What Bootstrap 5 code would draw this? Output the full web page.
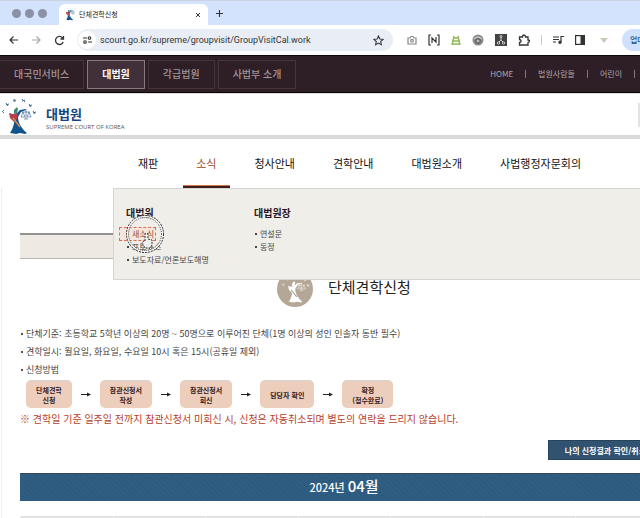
<!DOCTYPE html>
<html lang="ko">
<head>
<meta charset="utf-8">
<meta name="viewport" content="width=device-width, initial-scale=1">
<title>단체견학신청</title>
<link rel="stylesheet" href="https://cdn.jsdelivr.net/npm/bootstrap@5.3.0/dist/css/bootstrap.min.css">
<style>
body{font-family:"Noto Sans CJK KR",sans-serif;font-size:9px;line-height:18px;color:#444;background:#fff;overflow:hidden}
a{text-decoration:none;color:inherit}
button{border:0;background:none;padding:0;color:inherit}
svg{display:block;flex:none}
.tab-strip{background:#d3e3fd;height:25px;padding-left:12px;border-top:1px solid #c9d3e2}
.light{width:9px;height:9px;border-radius:50%;background:#8b90a4}
.light+.light{margin-left:4px}
.page-tab{width:149px;height:21px;margin-left:12px;padding:0 7px 0 5px;border-radius:6px 6px 0 0;background:#fff;font-size:7px;line-height:21px;color:#222}
.toolbar{height:30px;padding:0 0 0 8px;background:#fff;color:#444}
.address{flex:none;height:22px;width:50%;margin-left:12px;padding:0 9px 0 1px;border-radius:11px;background:#e9eef6}
.address input{border:0;outline:0;background:none;padding:0;font:9px/20px Roboto,"Noto Sans CJK KR",sans-serif;color:#333;min-width:0}
.site-info{width:18px;height:18px;border-radius:50%;background:#fff}
.tools{gap:11px;margin-left:14px}
.update{height:22px;padding:0 14px 0 8px;margin-left:14px;border-radius:11px;background:#cfe1fd;font-size:8px;font-weight:500;color:#24558e;white-space:nowrap}
.service-bar{height:38px;background:#2e1e26;border-top:1px solid #0c0609;border-bottom:1px solid #0c0609;color:#a3969b}
.sites{gap:3px}
.service-bar .site{height:29px;padding:0 14px;border:1px solid #45343c;font-size:10px;line-height:26px;font-weight:500;white-space:nowrap}
.service-bar .site.current{background:#41303a;border-color:#87797f;color:#fff;font-weight:700}
.service-bar .quick{gap:12px;font-size:8px;color:#b1a6aa;white-space:nowrap;margin-right:5px}
.quick i{width:1px;height:8px;background:#83777c}
.brand-row{height:46px;border-bottom:4px solid #d9d9d9;border-top:1px solid #ddd}
.brand-link{padding-top:4px}
.brand-text{margin:4px 0 0 8px}
.brand-name{font-size:13px;line-height:18px;font-weight:700;color:#15467e}
.brand-sub{font:6px/9px "Open Sans",sans-serif;color:#555}
.search-edge{width:2px;height:24px;background:#e2e2e2}
.main-nav{height:49px;padding-left:125px;gap:12px;position:relative}
.main-nav .section-link{padding:0 13px;font-size:11px;line-height:49px;height:49px;color:#111;white-space:nowrap}
.main-nav .section-link.current{color:#9a4a2b;border-bottom:2px solid #3b1f1a;box-shadow:inset 0 -1px #d2713e}
.mega{position:absolute;left:113px;right:0;top:49px;z-index:5;background:#f0eee9;border:1px solid #d5d5d5;border-right:0;padding:15px 12px 13px}
.mega section{width:128px}
.mega h2{font-size:10px;line-height:18px;font-weight:700;color:#2c141c;margin:0 0 5px}
.mega ul,.facts{list-style:none;margin:0;padding:0}
.mega li{font-size:8px;line-height:13px;padding-left:6px;position:relative;white-space:nowrap}
.mega li::before{content:"";position:absolute;left:1px;top:6px;width:2px;height:2px;background:#444}
.mega .focused{z-index:1}
.mega .focused::before{display:none}
.focused a{color:#9a4a2b}
.focus-box{position:absolute;left:-7px;top:0;width:37px;height:14px;border:1px dashed #df6e50;background:#fbd9c866}
.pointer{position:absolute;left:-1px;top:-12px;pointer-events:none}
.content{border-left:1px solid #eee;margin:0 -28px 0 1px;padding:45px 0 0 18px}
.crumbs{height:26px;background:#eeeae3;border-top:2px solid #929292;border-bottom:1px solid #bbb5ad}
.title-row{gap:15px;padding:12px 0 0 257px}
.title-row h1{font-size:15px;line-height:22px;font-weight:400;color:#222;margin:0 0 4px}
.facts{margin-top:18px}
.facts li{line-height:18px;padding-left:6px;background:linear-gradient(#555,#555) 1px 8px/2px 2px no-repeat;white-space:nowrap}
.steps{gap:9px;margin:1px 0 0 6px;color:#222}
.step-box{height:28px;padding:0 10px;border-radius:5px;background:#edcebd;border-top:1px solid #d8d3cb;font-size:7px;line-height:10px;font-weight:700;color:#35201a;text-align:center;white-space:nowrap}
.notice{font-size:10px;line-height:20px;color:#b8402a;margin:1px 0 0;white-space:nowrap}
.result-btn{height:20px;margin-top:11px;padding:0 21px 0 16px;background:#315270;border:1px solid #27435a;font-size:8px;line-height:17px;font-weight:700;color:#fff;white-space:nowrap}
.month{height:28px;margin:13px 0 0;background:repeating-linear-gradient(45deg,#2d5b80 0 2px,#305e83 2px 4px);border-top:1px solid #35484f;font-size:11px;line-height:24px;font-weight:500;color:#fff;text-align:center}
.month b{font-size:15px;font-weight:500}
.days{width:100%;margin-top:15px;table-layout:fixed;background:#e2e2e2}
.days th{height:18px;border-left:1px solid #eee}
.logo{color:#456f99;--robe:#10538d;--shirt:#b63f4b;--face:#3b8a73;--band:#d98a55}
.seal{color:#f5f0e8;--robe:#fff;--shirt:#fff;--face:#fff;--band:#b4a797}
.robe-fill{fill:var(--robe)}.shirt-fill{fill:var(--shirt)}.face-fill{fill:var(--face)}.band-line{stroke:var(--band)}
</style>
<script src="https://cdn.jsdelivr.net/npm/bootstrap@5.3.0/dist/js/bootstrap.bundle.min.js"></script>
</head>
<body>
<svg width="0" height="0" class="position-absolute" aria-hidden="true">
<symbol id="justice" viewBox="0 0 38 38">
<g fill="none" stroke="currentColor" stroke-width="1"><path d="M2 14l2-2m0 3-2-2M6 7l3-1m-3-1 2 3M13 3l3-1m-2-1 1 3M22 3l3-1m-3-1 3 3M29 8l3-1m-3-1 2 3M33 15l3-1m-3-1 2 3"/></g>
<path class="robe-fill" d="M14 17l3-2 3-3 6-1v1l-5 2-3 5c0 6 4 12 9 16l-2 1-5-1-4 1-6-1c4-6 5-12 4-18z"/>
<path class="shirt-fill" d="M9 15l4 1 5-1-1 6-3 3-4-4z"/>
<path class="face-fill" d="M14 12l3-3 1 2-1 4-3 1z"/>
<path d="M26 11v10M22 14h8M23 14l-2 5h4zM29 14l-2 5h4zM24 21h4" fill="none" stroke="currentColor" stroke-width=".7"/>
<path class="band-line" d="M13 20l7 9" fill="none" stroke-width="1.5"/>
</symbol>
<symbol id="arrow" viewBox="0 0 10 5"><path d="M0 2.500h8" stroke="#222" fill="none"/><path d="M6 .5l4 2-4 2z" fill="#222"/></symbol>
</svg>

<header>
<div class="tab-strip d-flex align-items-end">
<div class="d-flex align-self-center"><span class="light"></span><span class="light"></span><span class="light"></span></div>
<div class="page-tab d-flex align-items-center">
<svg class="logo" width="11" height="12" viewBox="5 8 26 30"><use href="#justice" width="38" height="38"/></svg>
<span class="ms-1 flex-grow-1">단체견학신청</span>
<button aria-label="탭 닫기"><svg width="6" height="6" viewBox="0 0 6 6" stroke="#333"><path d="M1 1l4 4M5 1L1 5"/></svg></button>
</div>
<button class="align-self-center ms-2" aria-label="새 탭"><svg width="7" height="7" viewBox="0 0 7 7" stroke="#333" stroke-width="1.1"><path d="M3.500 0v7M0 3.500h7"/></svg></button>
</div>

<div class="toolbar d-flex align-items-center">
<button aria-label="뒤로"><svg width="11" height="10" viewBox="0 0 11 10" fill="none" stroke="#333" stroke-width="1.2"><path d="M10 5H2M5.500 1.500L2 5l3.500 3.500"/></svg></button>
<button class="ms-2 ps-1" aria-label="앞으로"><svg width="11" height="10" viewBox="0 0 11 10" fill="none" stroke="#aaa" stroke-width="1.2"><path d="M1 5h8M5.500 1.500L9 5 5.500 8.500"/></svg></button>
<button class="ms-2 ps-1" aria-label="새로고침"><svg width="11" height="11" viewBox="0 0 11 11" fill="none" stroke="#333" stroke-width="1.3"><path d="M9.200 7A4 4 0 1 1 8.500 2.800L9.500 4M9.500 1v3h-3"/></svg></button>
<div class="address d-flex align-items-center">
<button class="site-info d-flex align-items-center justify-content-center" aria-label="사이트 정보"><svg width="9" height="8" viewBox="0 0 9 8" fill="none" stroke="#333" stroke-width="1.1"><path d="M0 2h4M5 6h4"/><circle cx="6.500" cy="2" r="1.300"/><circle cx="2" cy="6" r="1.300"/></svg></button>
<input class="flex-grow-1 ms-1" aria-label="주소" value="scourt.go.kr/supreme/groupvisit/GroupVisitCal.work">
<button aria-label="북마크"><svg width="11" height="11" viewBox="0 0 12 12" fill="none" stroke="#333" stroke-width="1.100"><path d="M6 1l1.500 3.300 3.600.4-2.700 2.400.8 3.600L6 8.900l-3.200 1.800.8-3.600L.9 4.700l3.600-.4z"/></svg></button>
</div>
<div class="tools d-flex align-items-center">
<svg width="10" height="10" viewBox="0 0 10 10" fill="none" stroke="#888" stroke-width="1.200"><path d="M1 3h2l1-1.500h2L7 3h2v6H1z"/><circle cx="5" cy="5.700" r="1.300"/></svg>
<svg width="12" height="12" viewBox="0 0 12 12" fill="none" stroke="#333" stroke-width="1.200"><path d="M3 1H1v10h2M9 1h2v10H9M4 9V4l4 4V3"/></svg>
<svg width="10" height="11" viewBox="0 0 10 11" fill="none" stroke="#8fb654" stroke-width="1.400"><path d="M3 1L1 10M7 1l2 9M2.500 3h5M2 6h6M1 9h8"/></svg>
<svg width="12" height="12" viewBox="0 0 12 12"><circle cx="6" cy="6" r="5.500" fill="#8b8b8b"/><path d="M2 5q4-4 8 0" fill="none" stroke="#ddd"/><circle cx="6" cy="7" r="2.200" fill="#bbb" stroke="#444"/></svg>
<svg width="12" height="12" viewBox="0 0 12 12" fill="none" stroke="#ddd" stroke-width=".9"><path d="M0 0h12v12H0z" fill="#444" stroke="none"/><path d="M6 3v3M4 8l2-2 2 2"/><circle cx="6" cy="2.500" r="1"/><circle cx="3.500" cy="9" r="1.200"/><circle cx="8.500" cy="9" r="1.200"/></svg>
<svg width="12" height="12" viewBox="0 0 12 12" fill="none" stroke="#333" stroke-width="1.300"><path d="M1.500 3h3q0-2 1.500-2t1.500 2H10v3q1.500 0 1.500 1T10 8.500V11H1.500V8.500Q3 8.500 3 7T1.500 5.500z"/></svg>
<svg width="1" height="10"><path fill="#ccc" d="M0 0h1v10H0z"/></svg>
<svg width="11" height="10" viewBox="0 0 11 10" fill="none" stroke="#333" stroke-width="1.200"><path d="M0 2h6M0 4.500h6M0 7h3M8 7V1.500h3"/><circle cx="7" cy="7.300" r="1.100" fill="#333"/></svg>
<svg width="10" height="10" viewBox="0 0 10 10"><path d="M.6.6h8.800v8.800H.6z" fill="none" stroke="#333" stroke-width="1.200"/><path d="M5.500 1H9v8H5.500z" fill="#333"/></svg>
<svg class="ms-1" width="8" height="6" viewBox="0 0 8 6"><path d="M0 1h8L4 6z" fill="#ccc9bf"/></svg>
</div>
<button class="update">업데이트</button>
</div>

<div class="service-bar d-flex align-items-center justify-content-between">
<nav class="sites d-flex" aria-label="사이트">
<a class="site border-start-0" href="#">대국민서비스</a><a class="site current" href="#">대법원</a><a class="site" href="#">각급법원</a><a class="site" href="#">사법부 소개</a>
</nav>
<nav class="quick d-flex align-items-center" aria-label="바로가기"><a href="#">HOME</a><i></i><a href="#">법원사람들</a><i></i><a href="#">어린이</a><i></i></nav>
</div>

<div class="brand-row d-flex align-items-center justify-content-between">
<a href="#" class="brand-link d-flex align-items-center"><svg class="logo" width="38" height="38"><use href="#justice"/></svg>
<span class="brand-text"><span class="brand-name d-block">대법원</span><span class="brand-sub d-block">SUPREME COURT OF KOREA</span></span></a>
<span class="search-edge"></span>
</div>

<nav class="main-nav d-flex" aria-label="주 메뉴">
<a class="section-link" href="#">재판</a><a class="section-link current" href="#">소식</a><a class="section-link" href="#">청사안내</a><a class="section-link" href="#">견학안내</a><a class="section-link" href="#">대법원소개</a><a class="section-link" href="#">사법행정자문회의</a>
<div class="mega d-flex">
<section><h2>대법원</h2><ul>
<li class="focused"><span class="focus-box"></span><a class="position-relative" href="#">새소식</a>
<svg class="pointer" width="40" height="40" viewBox="0 0 40 40" fill="none"><circle cx="20" cy="19" r="17.500" stroke="#fff" stroke-width="2"/><circle cx="20" cy="19" r="18.500" stroke="#222" stroke-dasharray="2 1"/><circle cx="20" cy="19" r="16.500" stroke="#333" stroke-dasharray="1 1"/><path d="M20 26v-6q0-2 1.500-2t1.500 2v4l4 1v5l-2 3h-5l-3-5q1-2 3-2z" fill="#eee" stroke="#333" stroke-dasharray="2 1"/></svg></li>
<li><a href="#">포토뉴스</a></li><li><a href="#">보도자료/언론보도해명</a></li></ul></section>
<section><h2>대법원장</h2><ul><li><a href="#">연설문</a></li><li><a href="#">동정</a></li></ul></section>
</div>
</nav>
</header>

<main class="content">
<div class="crumbs"></div>
<div class="title-row d-flex align-items-center">
<svg class="seal" width="36" height="36" viewBox="0 0 36 36"><circle cx="18" cy="18" r="18" fill="#b4a797"/><use href="#justice" x="4" y="3" width="30" height="30"/></svg>
<h1>단체견학신청</h1>
</div>
<ul class="facts">
<li>단체기준: 초등학교 5학년 이상의 20명 ~ 50명으로 이루어진 단체(1명 이상의 성인 인솔자 동반 필수)</li>
<li>견학일시: 월요일, 화요일, 수요일 10시 혹은 15시(공휴일 제외)</li>
<li>신청방법</li>
</ul>
<div class="steps d-flex align-items-center">
<div class="step-box d-flex align-items-center"><span>단체견학<br>신청</span></div><svg width="10" height="5"><use href="#arrow"/></svg>
<div class="step-box d-flex align-items-center"><span>참관신청서<br>작성</span></div><svg width="10" height="5"><use href="#arrow"/></svg>
<div class="step-box d-flex align-items-center"><span>참관신청서<br>회신</span></div><svg width="10" height="5"><use href="#arrow"/></svg>
<div class="step-box d-flex align-items-center"><span>담당자 확인</span></div><svg width="10" height="5"><use href="#arrow"/></svg>
<div class="step-box d-flex align-items-center"><span>확정<br>(접수완료)</span></div>
</div>
<p class="notice">※ 견학일 기준 일주일 전까지 참관신청서 미회신 시, 신청은 자동취소되며 별도의 연락을 드리지 않습니다.</p>
<div class="d-flex justify-content-end"><button class="result-btn">나의 신청결과 확인/취소</button></div>
<h2 class="month">2024년 <b>04월</b></h2>
<table class="days" aria-label="달력"><tr><th></th><th></th><th></th><th></th><th></th><th></th><th></th></tr></table>
</main>
</body>
</html>
